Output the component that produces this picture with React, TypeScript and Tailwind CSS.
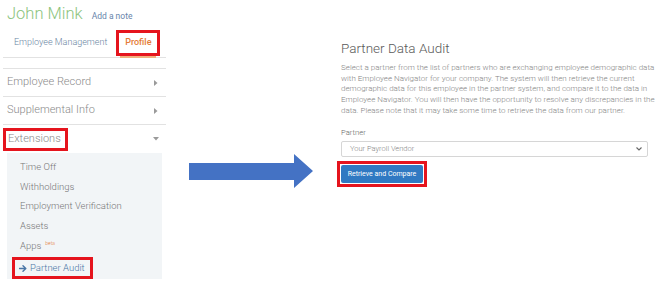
import React from "react";

const font = { fontFamily: "Roboto, 'Open Sans', Arial, sans-serif" };

function Chevron({ down }: { down?: boolean }) {
  return down ? (
    <svg width="6" height="4" viewBox="0 0 6 4"><path d="M0 0 L6 0 L3 3.5 Z" fill="#9a9a9a" /></svg>
  ) : (
    <svg width="4" height="6" viewBox="0 0 4 6"><path d="M0 0 L3.5 3 L0 6 Z" fill="#9a9a9a" /></svg>
  );
}

export default function App() {
  return (
    <div className="w-[660px] h-[288px] bg-white flex overflow-hidden" style={font}>
      {/* Left sidebar */}
      <div className="w-[166px] shrink-0 flex flex-col">
        <div className="flex items-baseline pl-[7px] pt-[6px] h-[28px] whitespace-nowrap">
          <span className="text-[16.5px] font-light text-[#8cc47e] leading-none">John Mink</span>
          <span className="ml-[9px] text-[8.5px] text-[#6785ab]">Add a note</span>
        </div>
        <div className="flex items-center h-[30px] ml-[3px] border-b border-[#e2e2e2] relative whitespace-nowrap">
          <span className="ml-[11px] text-[9px] font-light text-[#6a86a3]">Employee Management</span>
          <div className="ml-[9px] w-[44px] h-[26px] border-[3px] border-[#e5141d] flex items-center justify-center relative">
            <span className="text-[9px] font-medium text-[#e57d38]">Profile</span>
            <div className="absolute left-[1px] right-[1px] bottom-[-5px] h-[2px] bg-[#f0b07e]" />
          </div>
        </div>
        <div className="h-[11px] ml-[3px] border-b border-[#e2e2e2]" />
        <div className="h-[28px] ml-[3px] border-b border-[#e2e2e2] flex items-center justify-between pl-[4px] pr-[8px]">
          <span className="text-[11px] font-light text-[#8a8a8a]">Employee Record</span>
          <Chevron />
        </div>
        <div className="h-[28px] ml-[3px] border-b border-[#e2e2e2] flex items-center justify-between pl-[4px] pr-[8px]">
          <span className="text-[11px] font-light text-[#8a8a8a]">Supplemental Info</span>
          <Chevron />
        </div>
        <div className="h-[28px] ml-[3px] flex items-center justify-between pr-[7px]">
          <div className="h-[23px] w-[65px] border-[3px] border-[#e5141d] flex items-center pl-[2px]">
            <span className="text-[11px] font-light text-[#8a8a8a]">Extensions</span>
          </div>
          <Chevron down />
        </div>
        <div className="ml-[7px] mr-[4px] h-[126px] bg-[#f2f5f7] flex flex-col pt-[4px]">
          {["Time Off", "Withholdings", "Employment Verification", "Assets"].map((t) => (
            <div key={t} className="h-[20px] flex items-center pl-[13px] text-[9.5px] font-light text-[#777777]">
              {t}
            </div>
          ))}
          <div className="h-[20px] flex items-center pl-[13px] text-[9.5px] font-light text-[#777777]">
            Apps<span className="ml-[4px] text-[5px] text-[#e57d38] self-start mt-[4px]">beta</span>
          </div>
          <div className="ml-[5px] mt-[1px] w-[81px] h-[22px] border-[3px] border-[#e5141d] flex items-center pl-[4px]">
            <svg width="8" height="7" viewBox="0 0 8 7" className="mr-[3px]">
              <path d="M0.5 3.5 L6.5 3.5 M4 0.8 L6.8 3.5 L4 6.2" stroke="#4a76a6" strokeWidth="1.4" fill="none" strokeLinecap="round" strokeLinejoin="round" />
            </svg>
            <span className="text-[9.5px] font-light text-[#4a76a6]">Partner Audit</span>
          </div>
        </div>
      </div>

      {/* Arrow */}
      <div className="flex-1 flex items-start pt-[154px] pl-[23px]">
        <svg width="124" height="35" viewBox="0 0 124 35">
          <path d="M0 9 L105 9 L105 0 L124 17 L105 34 L105 26 L0 26 Z" fill="#4472c4" />
        </svg>
      </div>

      {/* Right panel */}
      <div className="w-[307px] shrink-0 mr-[12px] pt-[39px]">
        <div className="text-[13.5px] font-light text-[#5a5a5a] leading-[18px]">Partner Data Audit</div>
        <p className="mt-[6px] text-[8px] leading-[10.7px] text-[#858585] font-light whitespace-nowrap">
          Select a partner from the list of partners who are exchanging employee demographic data
          <br />
          with Employee Navigator for your company. The system will then retrieve the current
          <br />
          demographic data for this employee in the partner system, and compare it to the data in
          <br />
          Employee Navigator. You will then have the opportunity to resolve any discrepancies in the
          <br />
          data. Please note that it may take some time to retrieve the data from our partner.
        </p>
        <div className="mt-[10px] text-[7.7px] font-light text-[#666]">Partner</div>
        <div className="mt-[3px] h-[16px] border border-[#d6d6d6] rounded-[2px] flex items-center justify-between pl-[8px] pr-[5px]">
          <span className="text-[7.5px] text-[#858585] font-light">Your Payroll Vendor</span>
          <svg width="6" height="4" viewBox="0 0 6 4"><path d="M0.5 0.5 L3 3 L5.5 0.5" stroke="#666" strokeWidth="1.1" fill="none" /></svg>
        </div>
        <div className="mt-[4px] ml-[-4px] w-[90px] h-[26px] border-[3px] border-[#e5141d] flex items-center justify-center">
          <div className="w-[82px] h-[18px] bg-[#3079c2] rounded-[2px] flex items-center justify-center">
            <span className="text-[7px] text-white">Retrieve and Compare</span>
          </div>
        </div>
      </div>
    </div>
  );
}
